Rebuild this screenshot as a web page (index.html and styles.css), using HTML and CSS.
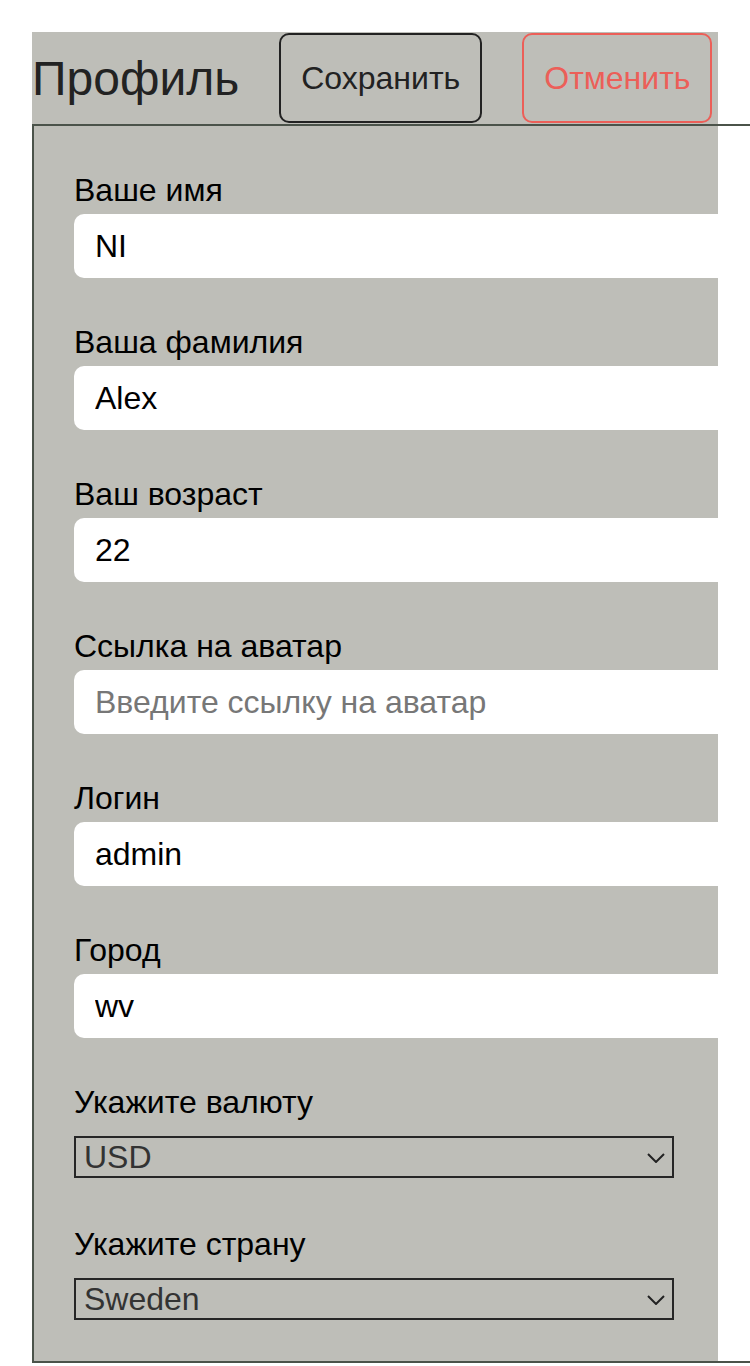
FILE: index.html
```html
<!DOCTYPE html>
<html lang="ru">
<head>
<meta charset="utf-8">
<title>Профиль</title>
<link rel="stylesheet" href="styles.css">
</head>
<body>
<div class="profile">
  <header class="profile-header">
    <h1 class="profile-title">Профиль</h1>
    <button class="btn btn-save" type="button">Сохранить</button>
    <button class="btn btn-cancel" type="button">Отменить</button>
  </header>
  <form class="profile-form">
    <div class="field">
      <label class="field-label" for="f-name">Ваше имя</label>
      <input class="field-input" id="f-name" type="text" value="NI">
    </div>
    <div class="field">
      <label class="field-label" for="f-last">Ваша фамилия</label>
      <input class="field-input" id="f-last" type="text" value="Alex">
    </div>
    <div class="field">
      <label class="field-label" for="f-age">Ваш возраст</label>
      <input class="field-input" id="f-age" type="text" value="22">
    </div>
    <div class="field">
      <label class="field-label" for="f-avatar">Ссылка на аватар</label>
      <input class="field-input" id="f-avatar" type="text" placeholder="Введите ссылку на аватар">
    </div>
    <div class="field">
      <label class="field-label" for="f-login">Логин</label>
      <input class="field-input" id="f-login" type="text" value="admin">
    </div>
    <div class="field">
      <label class="field-label" for="f-city">Город</label>
      <input class="field-input" id="f-city" type="text" value="wv">
    </div>
    <div class="field field-select">
      <label class="field-label" for="f-cur">Укажите валюту</label>
      <div class="select-wrap">
        <select class="select" id="f-cur">
          <option>USD</option>
          <option>EUR</option>
          <option>RUB</option>
        </select>
        <svg class="chevron" width="18" height="10" viewBox="0 0 18 10"><polyline points="1,1 9,9 17,1" fill="none" stroke="#222" stroke-width="2"/></svg>
      </div>
    </div>
    <div class="field field-select">
      <label class="field-label" for="f-country">Укажите страну</label>
      <div class="select-wrap">
        <select class="select" id="f-country">
          <option>Sweden</option>
          <option>Russia</option>
          <option>USA</option>
        </select>
        <svg class="chevron" width="18" height="10" viewBox="0 0 18 10"><polyline points="1,1 9,9 17,1" fill="none" stroke="#222" stroke-width="2"/></svg>
      </div>
    </div>
  </form>
</div>
</body>
</html>
```
FILE: styles.css
```css
html {
  overflow-x: hidden;
}

body {
  margin: 0;
  background: #ffffff;
  font-family: "Liberation Sans", Arial, sans-serif;
}

.profile {
  margin: 32px 0 0 32px;
  width: 686px;
  background: #bebeb8;
}

.profile-header {
  display: flex;
  align-items: center;
  gap: 40px;
  height: 92px;
}

.profile-title {
  margin: 0;
  font-size: 48px;
  font-weight: normal;
  color: #222222;
}

.btn {
  height: 90px;
  padding: 0 20px;
  border-radius: 10px;
  background: transparent;
  font-family: "Liberation Sans", Arial, sans-serif;
  font-size: 32px;
  cursor: pointer;
}

.btn-save {
  border: 2px solid #222222;
  color: #222222;
}

.btn-cancel {
  border: 2px solid #ec5f58;
  color: #ec5f58;
}

.profile-form {
  box-sizing: border-box;
  width: 800px;
  border: 2px solid #4b534a;
  border-right: none;
  padding: 46px 0 41px 40px;
}

.field {
  margin-bottom: 46px;
}

.field-label {
  display: block;
  font-size: 32px;
  line-height: 37px;
  color: #000000;
  margin-bottom: 5px;
}

.field-input {
  display: block;
  box-sizing: border-box;
  width: 700px;
  height: 64px;
  border: none;
  border-radius: 10px;
  padding: 0 21px;
  background: #ffffff;
  font-family: "Liberation Sans", Arial, sans-serif;
  font-size: 32px;
  color: #000000;
  outline: none;
}

.field-input::placeholder {
  color: #777777;
}

.field-select {
  margin-bottom: 48px;
}

.field-select:last-child {
  margin-bottom: 0;
}

.field-select .field-label {
  margin-bottom: 15px;
}

.select-wrap {
  position: relative;
  width: 600px;
}

.select {
  display: block;
  box-sizing: border-box;
  width: 600px;
  height: 42px;
  -webkit-appearance: none;
  appearance: none;
  border: 2px solid #262626;
  border-radius: 0;
  padding: 0 0 0 8px;
  background: transparent;
  font-family: "Liberation Sans", Arial, sans-serif;
  font-size: 32px;
  line-height: 38px;
  color: #333333;
  outline: none;
}

.chevron {
  position: absolute;
  right: 9px;
  top: 17px;
  pointer-events: none;
}
```
